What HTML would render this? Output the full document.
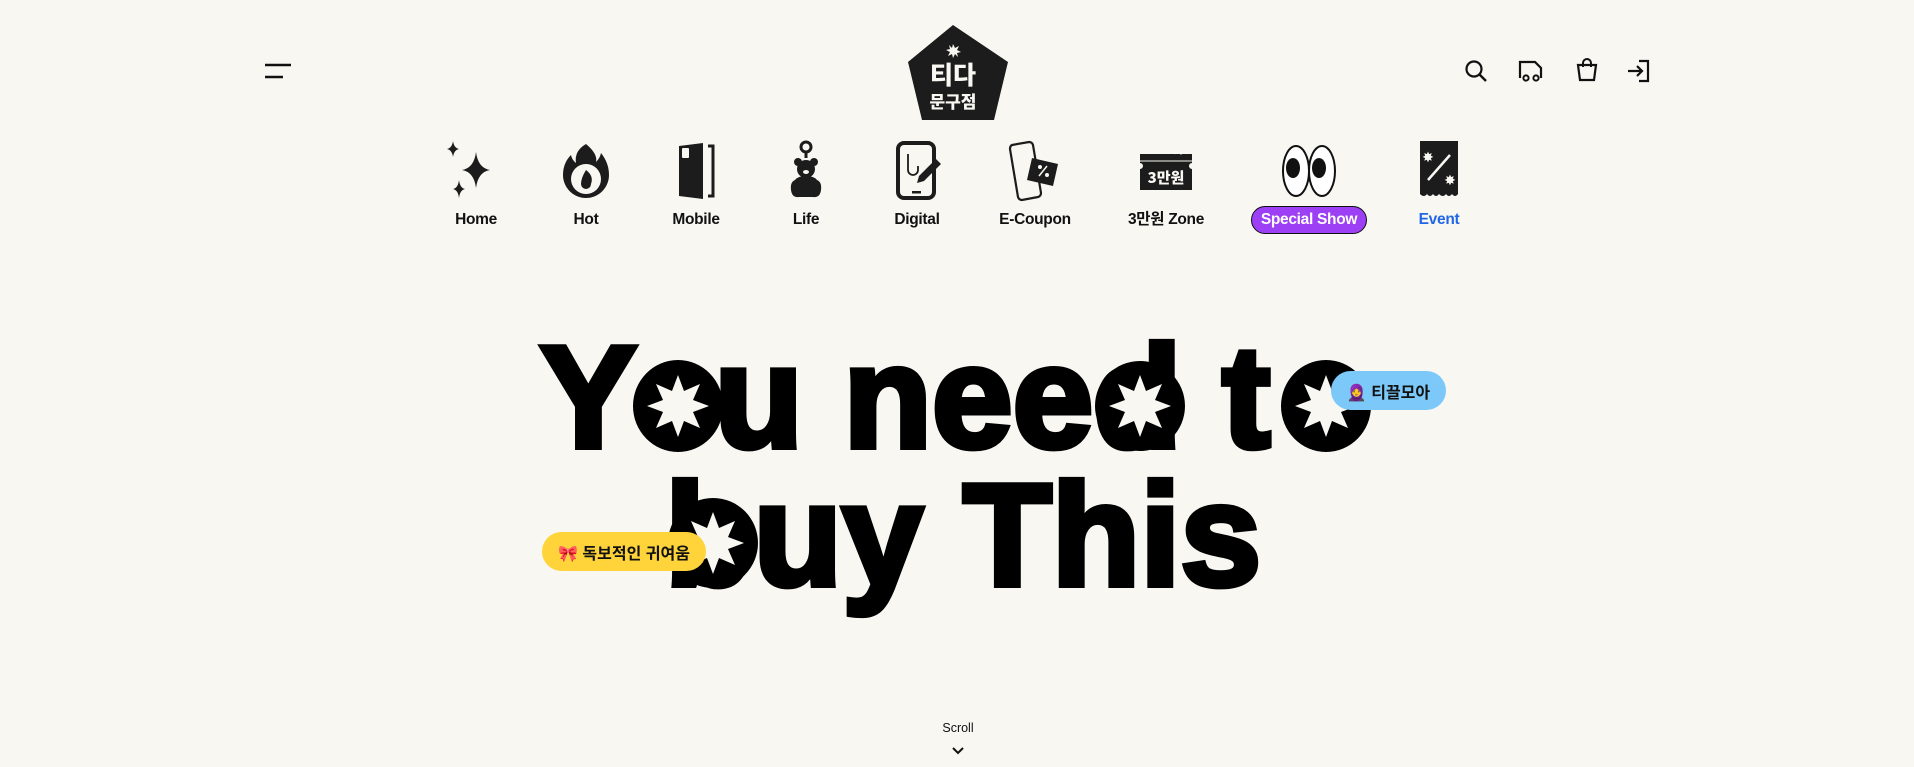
<!DOCTYPE html>
<html><head><meta charset="utf-8"><style>
*{margin:0;padding:0;box-sizing:border-box}
body{width:1914px;height:767px;background:#f8f7f2;position:relative;overflow:hidden;font-family:"Liberation Sans","Noto Sans CJK KR",sans-serif;color:#111}
.a{position:absolute}
.nav{position:absolute;top:140px;width:130px;margin-left:-65px;text-align:center}
.nav svg{display:block;margin:0 auto;width:62px;height:62px}
.nav span{display:inline-block;margin-top:8px;font-size:15.5px;font-weight:bold;letter-spacing:-0.3px;line-height:20px}
.h{position:absolute;font-weight:bold;font-size:145px;letter-spacing:0;line-height:1;color:#000;white-space:nowrap;-webkit-text-stroke:6px #000}
.h i{font-style:normal;color:transparent;-webkit-text-stroke:0}
.pill{position:absolute;border-radius:20px;font-size:16px;font-weight:bold;display:flex;align-items:center;justify-content:center;font-family:"Liberation Sans","Noto Sans CJK KR",sans-serif}
</style></head><body>
<svg class="a" style="left:264px;top:62px" width="28" height="18"><path d="M1 3H27M1 15H19" stroke="#111" stroke-width="2.4"/></svg>
<svg class="a" style="left:905px;top:22px" width="106" height="102" viewBox="0 0 106 102"><path d="M48 3L3 40L17 98H89L103 40Z" fill="#1c1c1c"/>
<path d="M48 22l2 4 4-2-2 4 4 2-4 1 1 4-3-3-2 4-1-4-4 2 2-4-4-2 4-1-1-4 3 3z" fill="#f8f7f2"/>
<text x="48" y="62" text-anchor="middle" font-family="Noto Sans CJK KR" font-weight="900" font-size="25" fill="#f8f7f2">티다</text>
<text x="48" y="86" text-anchor="middle" font-family="Noto Sans CJK KR" font-weight="900" font-size="17" fill="#f8f7f2">문구점</text></svg>
<svg class="a" style="left:1464px;top:59px" width="24" height="24"><circle cx="10" cy="10" r="7.5" fill="none" stroke="#111" stroke-width="2.2"/><path d="M15.5 15.5L22 22" stroke="#111" stroke-width="2.4"/></svg>
<svg class="a" style="left:1518px;top:59px" width="26" height="24"><path d="M2 19V3H17L23 9V19" fill="none" stroke="#111" stroke-width="2.2"/><circle cx="8" cy="19" r="2.6" fill="#f8f7f2" stroke="#111" stroke-width="2"/><circle cx="18" cy="19" r="2.6" fill="#f8f7f2" stroke="#111" stroke-width="2"/></svg>
<svg class="a" style="left:1575px;top:58px" width="24" height="24"><path d="M3 7H21L19 22H5Z" fill="none" stroke="#111" stroke-width="2.2"/><path d="M8 9V5a4 4 0 0 1 8 0v4" fill="none" stroke="#111" stroke-width="2"/></svg>
<svg class="a" style="left:1626px;top:59px" width="26" height="24"><path d="M13 2H22V22H13" fill="none" stroke="#111" stroke-width="2.2"/><path d="M2 12H16M11 7l5 5-5 5" fill="none" stroke="#111" stroke-width="2.2"/></svg>

<div class="nav" style="left:476px"><svg viewBox="0 0 62 62"><path d="M8 1q1 7 6 8q-5 1-6 8q-1-7-6-8q5-1 6-8z M31 12q2 16 14 18q-12 2-14 18q-2-16-14-18q12-2 14-18z M14 40q1 8 6 9q-5 1-6 9q-1-8-6-9q5-1 6-9z" fill="#1c1c1c"/></svg><span>Home</span></div>
<div class="nav" style="left:586px"><svg viewBox="0 0 62 62"><path d="M31 4q12 10 10 18q4-4 5-9q8 10 8 22a23 23 0 0 1-46 0q0-12 8-20q1 5 5 8q-2-12 10-19z" fill="#1c1c1c"/><circle cx="31" cy="39" r="15" fill="#f8f7f2"/><path d="M31 30q8 6 5 14a5 5 0 0 1-10 0q0-6 5-14z" fill="#1c1c1c"/></svg><span>Hot</span></div>
<div class="nav" style="left:696px"><svg viewBox="0 0 62 62"><path d="M14 6L38 3V59L14 56Z" fill="#1c1c1c"/><rect x="17" y="8" width="7" height="10" rx="1" fill="#f8f7f2"/><path d="M43 6H48V56H43" fill="none" stroke="#1c1c1c" stroke-width="3"/></svg><span>Mobile</span></div>
<div class="nav" style="left:806px"><svg viewBox="0 0 62 62"><circle cx="31" cy="7" r="5" fill="none" stroke="#1c1c1c" stroke-width="3"/><path d="M31 12V18" stroke="#1c1c1c" stroke-width="3"/><circle cx="23" cy="22" r="4" fill="#1c1c1c"/><circle cx="39" cy="22" r="4" fill="#1c1c1c"/><ellipse cx="31" cy="29" rx="9" ry="9" fill="#1c1c1c"/><ellipse cx="31" cy="32" rx="3" ry="2" fill="#f8f7f2"/><path d="M20 40q-5 2-4 10q1 8 8 7h14q7 1 8-7q1-8-4-10q-3-4-11-4q-8 0-11 4z" fill="#1c1c1c"/></svg><span>Life</span></div>
<div class="nav" style="left:917px"><svg viewBox="0 0 62 62"><rect x="12" y="3" width="36" height="55" rx="6" fill="none" stroke="#1c1c1c" stroke-width="4"/><rect x="26" y="51" width="9" height="2.5" fill="#1c1c1c"/><path d="M22 14v16a5 5 0 0 0 10 0v-4" fill="none" stroke="#1c1c1c" stroke-width="1.8"/><path d="M50 19l5 5L38 41l-7 2 2-7z" fill="#1c1c1c"/></svg><span>Digital</span></div>
<div class="nav" style="left:1035px"><svg viewBox="0 0 62 62"><path d="M8 5L25 2Q28 2 29 5L37 53Q37 56 34 57L18 60Q15 60 14 57L6 9Q6 6 8 5z" fill="#f8f7f2" stroke="#1c1c1c" stroke-width="2.2"/><path d="M28 18L54 24L49 46L23 40Z" fill="#1c1c1c"/><path d="M35 36l8-10" stroke="#f8f7f2" stroke-width="1.5"/><circle cx="36" cy="27" r="2" fill="#f8f7f2"/><circle cx="43" cy="35" r="2" fill="#f8f7f2"/></svg><span>E-Coupon</span></div>
<div class="nav" style="left:1166px"><svg viewBox="0 0 62 62"><path d="M5 14H57V23a3 3 0 0 0 0 6V50H5V29a3 3 0 0 0 0-6Z" fill="#1c1c1c"/><path d="M5 21H57" stroke="#f8f7f2" stroke-width="1"/><text x="31" y="43" text-anchor="middle" font-family="Noto Sans CJK KR" font-weight="900" font-size="15" fill="#f8f7f2">3만원</text><path d="M40 14q3-5 6 0q3-5 6 0" fill="none" stroke="#f8f7f2" stroke-width="1.2"/></svg><span>3만원 Zone</span></div>
<div class="nav" style="left:1309px"><svg viewBox="0 0 62 62"><ellipse cx="18" cy="31" rx="13" ry="25" fill="#fff" stroke="#111" stroke-width="2"/><ellipse cx="44" cy="31" rx="13" ry="25" fill="#fff" stroke="#111" stroke-width="2"/><ellipse cx="15" cy="28" rx="7" ry="10" fill="#111"/><ellipse cx="41" cy="28" rx="7" ry="10" fill="#111"/></svg><span style="background:#9d3ff5;color:#fff;border:1.5px solid #111;border-radius:14px;padding:3px 9px;margin-top:4px">Special Show</span></div>
<div class="nav" style="left:1439px"><svg viewBox="0 0 62 62"><path d="M12 1H50V54q-3 4-6 0q-3 4-6 0q-3 4-7 0q-3 4-6 0q-3 4-6 0q-3 4-7 0Z" fill="#1c1c1c"/><path d="M20 40L42 15" stroke="#f8f7f2" stroke-width="2.5"/><text x="20" y="22" text-anchor="middle" font-size="14" fill="#f8f7f2">✸</text><text x="42" y="45" text-anchor="middle" font-size="14" fill="#f8f7f2">✸</text></svg><span style="color:#2266e8">Event</span></div>

<div class="h" style="left:540px;top:325px">Y<i>o</i>u need t<i>o</i></div>
<div class="h" style="left:665px;top:463px">buy This</div>
<svg class="a" style="left:0;top:0" width="1914" height="767">
<defs><polygon id="st" points="0,-31 6,-15 22,-22 15,-6 31,0 15,6 22,22 6,15 0,31 -6,15 -22,22 -15,6 -31,0 -15,-6 -22,-22 -6,-15" fill="#f8f7f2"/></defs>
<ellipse cx="678" cy="406" rx="45" ry="46" fill="#000"/><circle cx="1140" cy="406" r="45" fill="#000"/><ellipse cx="1326" cy="406" rx="45" ry="46" fill="#000"/><circle cx="713" cy="543" r="45" fill="#000"/>
<use href="#st" x="678" y="406"/><use href="#st" x="1140" y="406"/><use href="#st" x="1326" y="406"/><use href="#st" x="713" y="543"/>
</svg>
<div class="pill" style="left:1331px;top:371px;width:115px;height:39px;background:#7cc8f8">🧕 티끌모아</div>
<div class="pill" style="left:542px;top:532px;width:164px;height:39px;background:#ffd43b">🎀 독보적인 귀여움</div>

<div class="a" style="left:930px;top:721px;width:56px;text-align:center;font-size:12.5px">Scroll</div>
<svg class="a" style="left:951px;top:746px" width="14" height="10"><path d="M2 2l5 5 5-5" fill="none" stroke="#111" stroke-width="2"/></svg>
</body></html>
